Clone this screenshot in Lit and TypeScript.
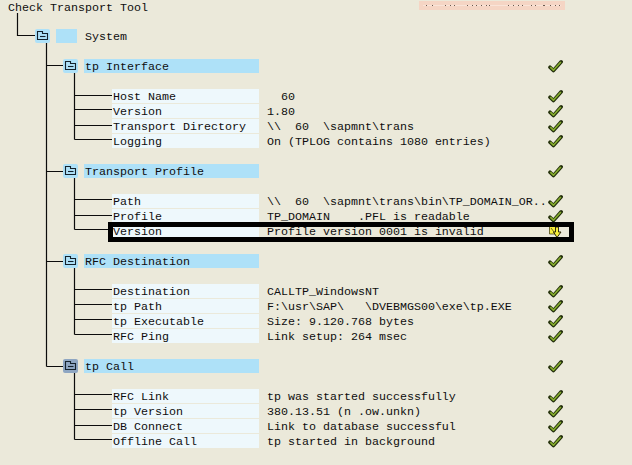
import { LitElement, html, css, svg } from "lit";
import { customElement } from "lit/decorators.js";

type Row =
  | { kind: "gap" }
  | { kind: "root"; label: string; icon?: string }
  | { kind: "group"; label: string; slate?: boolean; status: "ok" }
  | { kind: "leaf"; label: string; value: string; status: "ok" | "warn" };

const ROWS: Row[] = [
  { kind: "gap" },
  { kind: "root", label: "System" },
  { kind: "gap" },
  { kind: "group", label: "tp Interface", status: "ok" },
  { kind: "gap" },
  { kind: "leaf", label: "Host Name", value: "  60", status: "ok" },
  { kind: "leaf", label: "Version", value: "1.80", status: "ok" },
  { kind: "leaf", label: "Transport Directory", value: "\\\\  60  \\sapmnt\\trans", status: "ok" },
  { kind: "leaf", label: "Logging", value: "On (TPLOG contains 1080 entries)", status: "ok" },
  { kind: "gap" },
  { kind: "group", label: "Transport Profile", status: "ok" },
  { kind: "gap" },
  { kind: "leaf", label: "Path", value: "\\\\  60  \\sapmnt\\trans\\bin\\TP_DOMAIN_OR..", status: "ok" },
  { kind: "leaf", label: "Profile", value: "TP_DOMAIN    .PFL is readable", status: "ok" },
  { kind: "leaf", label: "Version", value: "Profile version 0001 is invalid", status: "warn" },
  { kind: "gap" },
  { kind: "group", label: "RFC Destination", status: "ok" },
  { kind: "gap" },
  { kind: "leaf", label: "Destination", value: "CALLTP_WindowsNT", status: "ok" },
  { kind: "leaf", label: "tp Path", value: "F:\\usr\\SAP\\   \\DVEBMGS00\\exe\\tp.EXE", status: "ok" },
  { kind: "leaf", label: "tp Executable", value: "Size: 9.120.768 bytes", status: "ok" },
  { kind: "leaf", label: "RFC Ping", value: "Link setup: 264 msec", status: "ok" },
  { kind: "gap" },
  { kind: "group", label: "tp Call", slate: true, status: "ok" },
  { kind: "gap" },
  { kind: "leaf", label: "RFC Link", value: "tp was started successfully", status: "ok" },
  { kind: "leaf", label: "tp Version", value: "380.13.51 (n .ow.unkn)", status: "ok" },
  { kind: "leaf", label: "DB Connect", value: "Link to database successful", status: "ok" },
  { kind: "leaf", label: "Offline Call", value: "tp started in background", status: "ok" },
];

const CONNECTORS = [
  "M17.5 13V35.5H35",
  "M46.5 43V366.5M46.5 65.5H63M46.5 171.5H63M46.5 261.5H63M46.5 366.5H63",
  "M74.5 73V139.5M74.5 95.5H112M74.5 109.5H112M74.5 125.5H112M74.5 139.5H112",
  "M74.5 178V229.5M74.5 199.5H112M74.5 215.5H112M74.5 229.5H112",
  "M74.5 268V334.5M74.5 289.5H112M74.5 304.5H112M74.5 319.5H112M74.5 334.5H112",
  "M74.5 373V439.5M74.5 394.5H112M74.5 409.5H112M74.5 425.5H112M74.5 439.5H112",
];

const STAMP_DOTS = [
  7, 13, 26, 31, 35, 48, 53, 57, 62, 67, 70, 89, 94, 99, 103, 112, 116, 124, 125, 131, 136, 140,
];

const folder = svg`<svg viewBox="0 0 15 14" width="15" height="14">
  <path d="M2.5 2.5H7.5V4.5H12.5V10.5H2.5Z" fill="none" stroke="#14222c" stroke-width="1.1"/>
  <path d="M5 7.5H10.5" stroke="#14222c" stroke-width="1.1"/>
</svg>`;

const check = svg`<svg viewBox="0 0 15 14" width="15" height="14">
  <path d="M2 8.2L5.4 11.6L13.2 2.8" fill="none" stroke="#232f0b" stroke-width="3.6" stroke-linecap="round" stroke-linejoin="round"/>
  <path d="M2.3 8.2L5.4 11.2L12.9 3" fill="none" stroke="#86ad2e" stroke-width="1.7" stroke-linejoin="round"/>
</svg>`;

const warn = svg`<svg viewBox="0 0 15 15" width="15" height="15">
  <path d="M1.5 2H7.5V10H1.5Z" fill="#f7ee3c" stroke="#4a4718" stroke-width="0.8"/>
  <path d="M3 4L6 8" stroke="#4a4718" stroke-width="0.8"/>
  <path d="M7.5 3H10.5V8H13L9 13.5L5.5 8H7.5Z" fill="#f7ee3c" stroke="#2e2a0c" stroke-width="1"/>
</svg>`;

@customElement("app-root")
export class AppRoot extends LitElement {
  static styles = css`
    :host {
      display: block;
      position: relative;
      width: 632px;
      height: 465px;
      overflow: hidden;
      background: #ebe9da;
      color: #0e0e0e;
      font: 11.67px/16px "Liberation Mono", "Courier New", monospace;
    }
    .head {
      display: flex;
      justify-content: space-between;
      align-items: flex-start;
      height: 14px;
      padding: 0 67px 0 8px;
    }
    .title { white-space: pre; }
    .stamp { margin-top: 1px; line-height: 0; }
    .stamp-bg { fill: #f5d5c4; }
    .stamp-band { fill: #f9e4d8; }
    .stamp-dot { fill: #6a5a50; }
    .row {
      display: grid;
      grid-template-columns: 259px 8px 281px 15px;
      height: 15px;
    }
    .cell {
      display: flex;
      justify-content: flex-end;
      height: 14px;
    }
    .bar { height: 14px; white-space: pre; padding-left: 1px; box-sizing: border-box; }
    .group-bar { width: 175px; background: #aee1f8; margin-left: 6px; }
    .leaf-bar { width: 147px; background: #eef8fc; }
    .icon {
      width: 15px;
      height: 14px;
      border-radius: 2px;
      background: #aee1f8;
      flex: none;
      line-height: 0;
    }
    .icon.slate { background: #8ea6c2; }
    .root .cell { justify-content: flex-start; padding-left: 35px; }
    .root .swatch { width: 21px; height: 14px; background: #aee1f8; margin-left: 6px; flex: none; }
    .root .name { margin-left: 8px; white-space: pre; }
    .value { grid-column: 3; white-space: pre; }
    .status { grid-column: 4; height: 14px; line-height: 0; }
    .lines {
      position: absolute;
      inset: 0;
      pointer-events: none;
    }
    .lines path { fill: none; stroke: #0c0c0c; stroke-width: 1.2; }
    .alert {
      position: absolute;
      left: 108px;
      top: 222px;
      width: 466px;
      height: 20px;
      box-sizing: border-box;
      border: 5px solid #000;
      pointer-events: none;
    }
  `;

  private renderStatus(s: "ok" | "warn") {
    return html`<div class="status">${s === "ok" ? check : warn}</div>`;
  }

  private renderRow(r: Row) {
    switch (r.kind) {
      case "gap":
        return html`<div class="row"></div>`;
      case "root":
        return html`<div class="row root">
          <div class="cell">
            <div class="icon">${folder}</div>
            <div class="swatch"></div>
            <div class="name">${r.label}</div>
          </div>
        </div>`;
      case "group":
        return html`<div class="row">
          <div class="cell">
            <div class="icon ${r.slate ? "slate" : ""}">${folder}</div>
            <div class="bar group-bar">${r.label}</div>
          </div>
          ${this.renderStatus(r.status)}
        </div>`;
      case "leaf":
        return html`<div class="row">
          <div class="cell"><div class="bar leaf-bar">${r.label}</div></div>
          <div class="value">${r.value}</div>
          ${this.renderStatus(r.status)}
        </div>`;
    }
  }

  render() {
    return html`
      <div class="head">
        <div class="title">Check Transport Tool</div>
        <div class="stamp">
          <svg width="146" height="9" viewBox="0 0 146 9">
            <rect class="stamp-bg" width="146" height="9"></rect>
            <rect class="stamp-band" x="4" y="4" width="138" height="1"></rect>
            ${STAMP_DOTS.map((x) => svg`<rect class="stamp-dot" x=${x} y="4" width="1" height="1"></rect>`)}
          </svg>
        </div>
      </div>
      ${ROWS.map((r) => this.renderRow(r))}
      <svg class="lines" width="632" height="465">
        ${CONNECTORS.map((d) => svg`<path d=${d}></path>`)}
      </svg>
      <div class="alert"></div>
    `;
  }
}
